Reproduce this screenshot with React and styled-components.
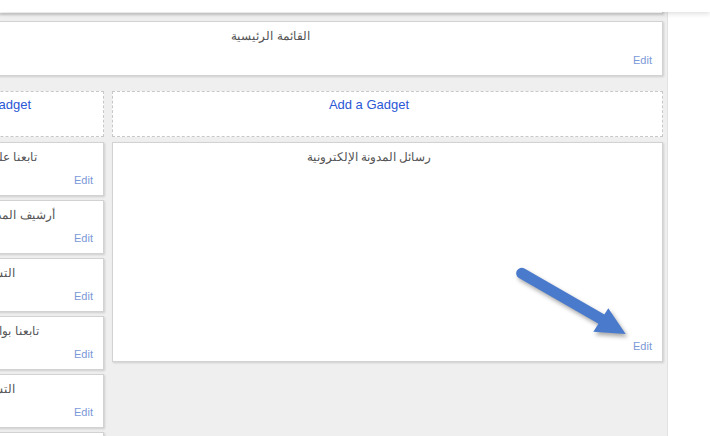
import styled, { createGlobalStyle } from "styled-components";

const GlobalStyle = createGlobalStyle`
  html, body {
    margin: 0;
    padding: 0;
    height: 100%;
    overflow: hidden;
    background: #fff;
    font-family: "Liberation Sans", Arial, sans-serif;
  }
`;

const Page = styled.div`
  display: flex;
  min-height: 100vh;
`;

const TopBar = styled.div`
  position: fixed;
  top: 0;
  left: 0;
  right: 0;
  height: 12px;
  background: #fff;
  box-shadow: 0 2px 5px rgba(0, 0, 0, 0.12);
  z-index: 5;
`;

const Canvas = styled.div`
  width: 667px;
  flex-shrink: 0;
  background: #efefef;
  border-right: 1px solid #e2e2e2;
  overflow: hidden;
`;

const Side = styled.div`
  flex: 1;
  background: #fff;
`;

const Inner = styled.div`
  margin-left: -85px;
  width: 748px;
  display: flex;
  flex-direction: column;
`;

const Card = styled.div`
  box-sizing: border-box;
  position: relative;
  height: ${(p) => p.$h}px;
  background: #fff;
  border: 1px solid #d2d2d2;
  box-shadow: 1px 1px 2px rgba(0, 0, 0, 0.14);
  display: flex;
  flex-direction: column;
  padding: 7px 10px 8px;
`;

const TopCard = styled(Card)`
  margin-top: -40px;
`;

const MainCard = styled(Card)`
  margin-top: 7px;
`;

const Title = styled.div`
  padding-right: 37px;
  text-align: center;
  font-size: 12px;
  line-height: 14px;
  color: #555;
  white-space: nowrap;
`;

const EditLink = styled.a`
  margin-top: auto;
  align-self: flex-end;
  font-size: 11px;
  line-height: 13px;
  color: #7b98d8;
  text-decoration: none;
`;

const Columns = styled.div`
  display: flex;
  gap: 8px;
  margin-top: 15px;
`;

const Column = styled.div`
  width: ${(p) => p.$w}px;
  display: flex;
  flex-direction: column;
  gap: 4px;
`;

const AddGadget = styled.div`
  box-sizing: border-box;
  height: 46px;
  margin-bottom: 1px;
  border: 1px dashed #c8c8c8;
  background: #fff;
  padding: 5px 37px 0 0;
  text-align: center;
  font-size: 13px;
  line-height: 16px;
  color: #2a58d6;
`;

const Arrow = styled.svg`
  position: absolute;
  left: 0;
  top: 0;
  width: 100%;
  height: 100%;
  pointer-events: none;
  filter: drop-shadow(2px 3px 2px rgba(0, 0, 0, 0.35));
`;

const Widget = ({ title, h, children }) => (
  <Card $h={h}>
    <Title dir="rtl">{title}</Title>
    <EditLink href="#">Edit</EditLink>
    {children}
  </Card>
);

const sideWidgets = [
  "تابعنا على فيسبوك",
  "أرشيف المدونة الإلكترونية",
  "التسميات",
  "تابعنا بواسطة البريد",
  "التسميات",
  "المشاركات",
];

export default function App() {
  return (
    <>
      <GlobalStyle />
      <TopBar />
      <Page>
        <Canvas>
          <Inner>
            <TopCard $h={54} />
            <MainCard $h={55}>
              <Title dir="rtl">القائمة الرئيسية</Title>
              <EditLink href="#">Edit</EditLink>
            </MainCard>
            <Columns>
              <Column $w={189}>
                <AddGadget>Add a Gadget</AddGadget>
                {sideWidgets.map((t, i) => (
                  <Widget key={i} title={t} h={54} />
                ))}
              </Column>
              <Column $w={551}>
                <AddGadget>Add a Gadget</AddGadget>
                <Widget title="رسائل المدونة الإلكترونية" h={220}>
                  <Arrow viewBox="0 0 549 218">
                    <line
                      x1="408.7"
                      y1="130.3"
                      x2="490"
                      y2="177"
                      stroke="#4a7acc"
                      strokeWidth="11"
                      strokeLinecap="round"
                    />
                    <polygon
                      points="512.7,191 495.3,165.3 480.3,188.7"
                      fill="#4a7acc"
                    />
                  </Arrow>
                </Widget>
              </Column>
            </Columns>
          </Inner>
        </Canvas>
        <Side />
      </Page>
    </>
  );
}
